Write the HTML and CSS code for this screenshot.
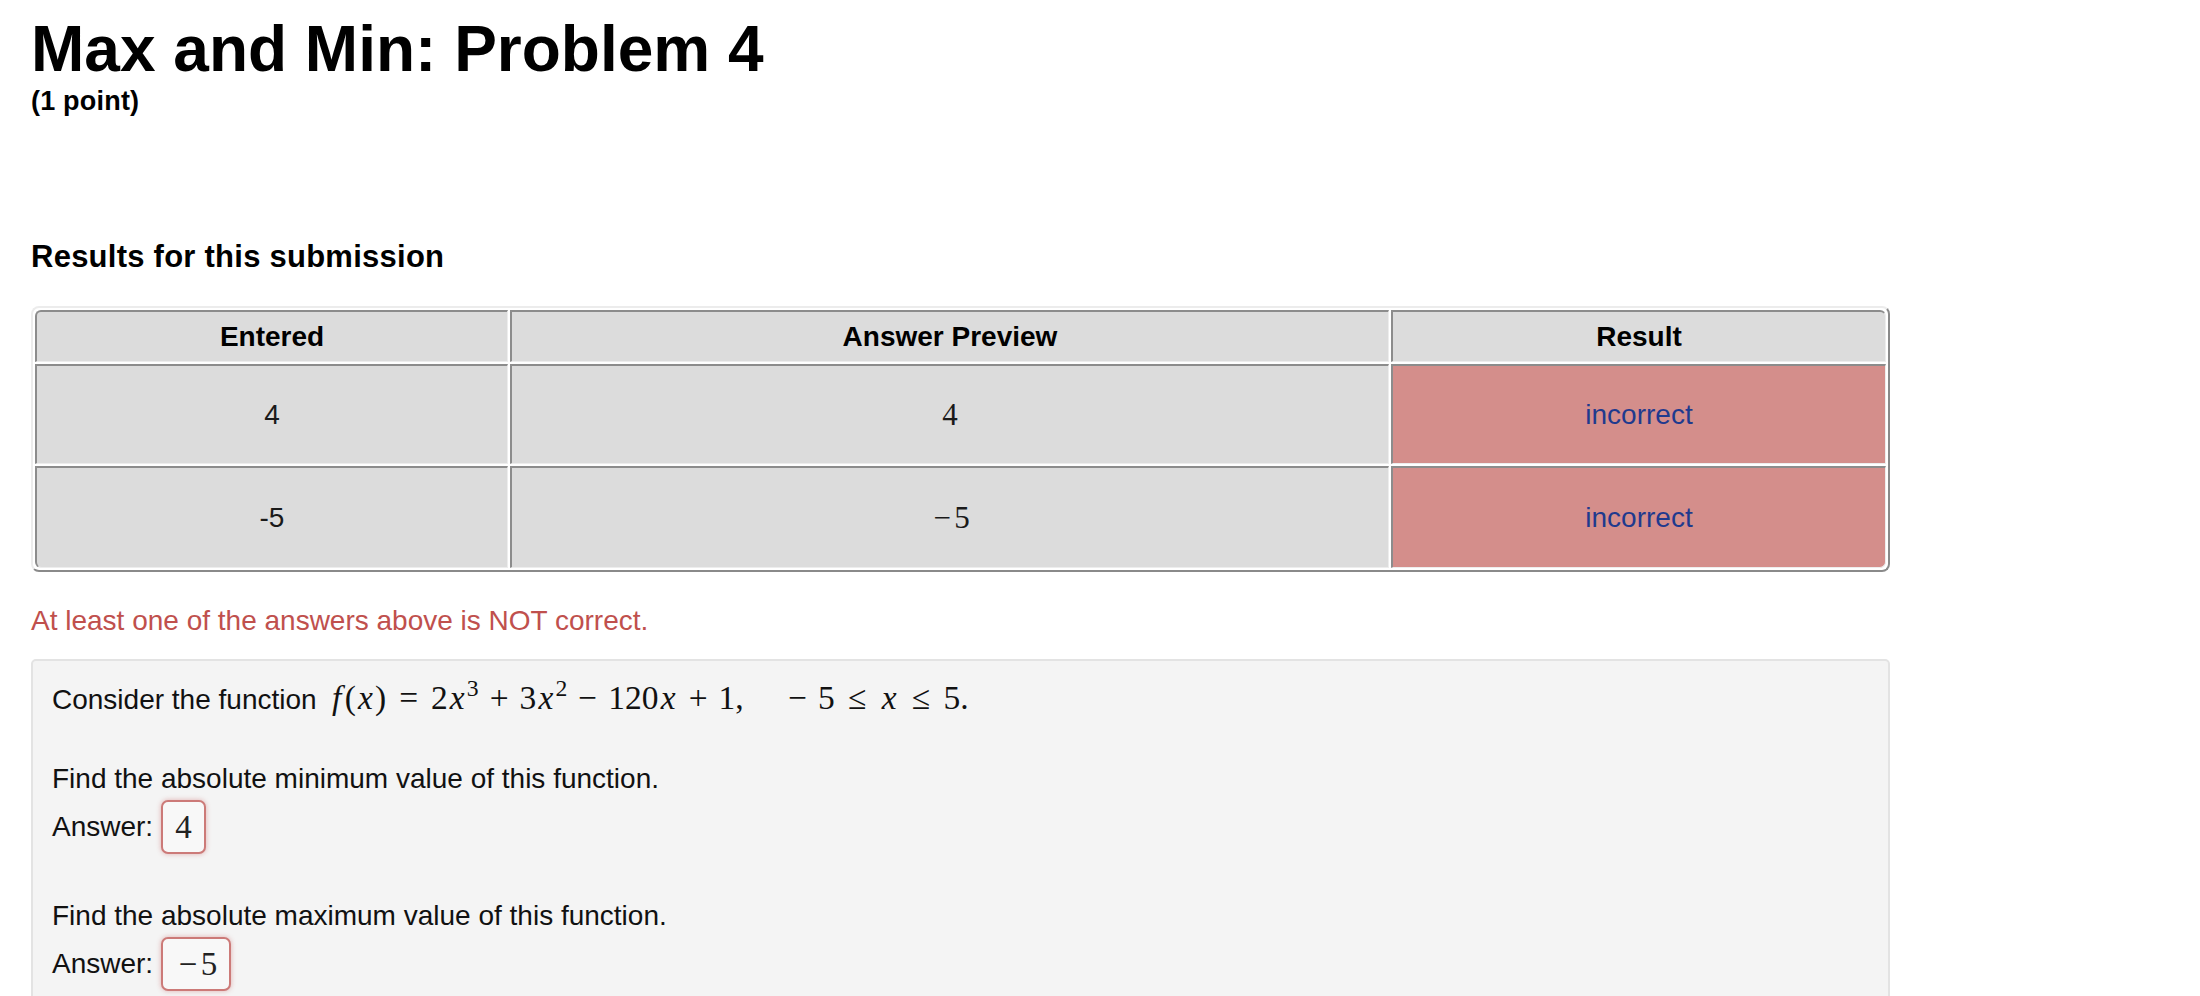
FILE: index.html
```html
<!DOCTYPE html>
<html lang="en">
<head>
<meta charset="utf-8">
<title>Max and Min: Problem 4</title>
<link rel="stylesheet" href="styles.css">
</head>
<body>
<main class="page">
  <h1 class="title">Max and Min: Problem 4</h1>
  <div class="points">(1 point)</div>

  <h2 class="results-heading">Results for this submission</h2>

  <table class="results">
    <colgroup>
      <col class="c1">
      <col class="c2">
      <col class="c3">
    </colgroup>
    <thead>
      <tr class="head-row">
        <th>Entered</th>
        <th>Answer Preview</th>
        <th>Result</th>
      </tr>
    </thead>
    <tbody>
      <tr class="row-a">
        <td>4</td>
        <td class="preview"><span class="math">4</span></td>
        <td class="bad">incorrect</td>
      </tr>
      <tr class="row-b">
        <td>-5</td>
        <td class="preview"><span class="math"><span class="mo-unary">−</span>5</span></td>
        <td class="bad">incorrect</td>
      </tr>
    </tbody>
  </table>

  <p class="warning">At least one of the answers above is NOT correct.</p>

  <section class="problem">
    <p class="intro">Consider the function <span class="math formula"><span class="mi mi-f">f</span>(<span class="mi">x</span>)<span class="mo-rel">=</span>2<span class="mi">x</span><sup>3</sup><span class="mo-bin">+</span>3<span class="mi">x</span><sup>2</sup><span class="mo-bin">−</span>120<span class="mi">x</span><span class="mo-bin">+</span>1,<span class="quad"></span><span class="mo-bin">−</span>5<span class="mo-rel">≤</span><span class="mi">x</span><span class="mo-rel">≤</span>5.</span></p>

    <div class="question">
      <p class="q-text">Find the absolute minimum value of this function.</p>
      <div class="answer-row">
        <span class="answer-label">Answer:</span>
        <span class="answer-box math">4</span>
      </div>
    </div>

    <div class="question">
      <p class="q-text">Find the absolute maximum value of this function.</p>
      <div class="answer-row">
        <span class="answer-label">Answer:</span>
        <span class="answer-box math"><span class="mo-unary">−</span>5</span>
      </div>
    </div>
  </section>
</main>
</body>
</html>
```

FILE: styles.css
```css
html, body {
  margin: 0;
  padding: 0;
  background: #ffffff;
}

body {
  font-family: "Liberation Sans", Arial, Helvetica, sans-serif;
  color: #000000;
}

.page {
  padding-left: 31px;
  width: 1859px;
}

.title {
  margin: 13px 0 0;
  font-size: 64px;
  line-height: 72px;
  font-weight: 700;
}

.points {
  margin-top: 1px;
  font-size: 27px;
  line-height: 30px;
  font-weight: 700;
  letter-spacing: 0.2px;
}

.results-heading {
  margin: 123px 0 0;
  font-size: 31px;
  line-height: 36px;
  font-weight: 700;
  letter-spacing: 0.25px;
}

/* results table */
.results {
  margin-top: 31px;
  width: 1859px;
  box-sizing: border-box;
  table-layout: fixed;
  border-collapse: separate;
  border-spacing: 2px;
  border-style: solid;
  border-width: 2px;
  border-color: #ececec #8a8a8a #8a8a8a #ececec;
  border-radius: 8px;
  font-size: 28px;
}

.results .c1 { width: 473px; }
.results .c2 { width: 879px; }
.results .c3 { width: 495px; }

.results th,
.results td {
  padding: 0;
  text-align: center;
  vertical-align: middle;
  background: #dcdcdc;
  border-style: solid;
  border-width: 2px 1px 1px 2px;
  border-color: #8c8c8c #ededed #ededed #8c8c8c;
}

.results th {
  font-weight: 700;
  color: #000;
}

.results td {
  color: #1a1a1a;
}

.head-row { height: 52px; }
.row-a { height: 100px; }
.row-b { height: 102px; }

.results thead th:first-child { border-top-left-radius: 6px; }
.results thead th:last-child { border-top-right-radius: 6px; }
.results tbody tr:last-child td:first-child { border-bottom-left-radius: 6px; }
.results tbody tr:last-child td:last-child { border-bottom-right-radius: 6px; }

.results td.bad {
  background: #d48e8b;
  color: #1f3a8e;
}

.results .preview .math {
  font-size: 31px;
}

.warning {
  margin: 32px 0 0;
  font-size: 28px;
  line-height: 34px;
  color: #c0504d;
}

/* problem box */
.problem {
  margin-top: 21px;
  background: #f4f4f4;
  border: 2px solid #e3e3e3;
  border-radius: 5px;
  padding: 17px 19px 40px;
  font-size: 28px;
  color: #111111;
}

.intro {
  margin: 0;
  line-height: 40px;
}

.question {
  margin-top: 42px;
}

.question + .question {
  margin-top: 45px;
}

.q-text {
  margin: 0;
  line-height: 34px;
}

.answer-row {
  display: flex;
  align-items: center;
  gap: 8px;
  margin-top: 4px;
  height: 54px;
}

.answer-box {
  display: inline-flex;
  align-items: center;
  justify-content: center;
  box-sizing: border-box;
  height: 54px;
  padding: 0 12px;
  border: 2px solid #cc7a78;
  border-radius: 7px;
  background: #f8f8f8;
  box-shadow: 0 0 5px rgba(200, 90, 90, 0.45);
  color: #222;
}

/* math typesetting */
.math {
  font-family: "Liberation Serif", "Times New Roman", serif;
  font-size: 33px;
}

.formula {
  font-size: 33.5px;
  margin-left: 4px;
}

.mi {
  display: inline-block;
  width: 0.572em;
  text-align: center;
  font-style: italic;
}

.mi-f {
  width: 0.49em;
}

.mo-bin {
  display: inline-block;
  width: 0.778em;
  margin: 0 0.222em;
  text-align: center;
}

.mo-rel {
  display: inline-block;
  width: 0.778em;
  margin: 0 0.278em;
  text-align: center;
}

.mo-unary {
  display: inline-block;
  width: 0.778em;
  text-align: center;
}

.quad {
  display: inline-block;
  width: 1em;
}

.math sup {
  font-size: 0.707em;
  vertical-align: 0.55em;
  line-height: 0;
}
```
